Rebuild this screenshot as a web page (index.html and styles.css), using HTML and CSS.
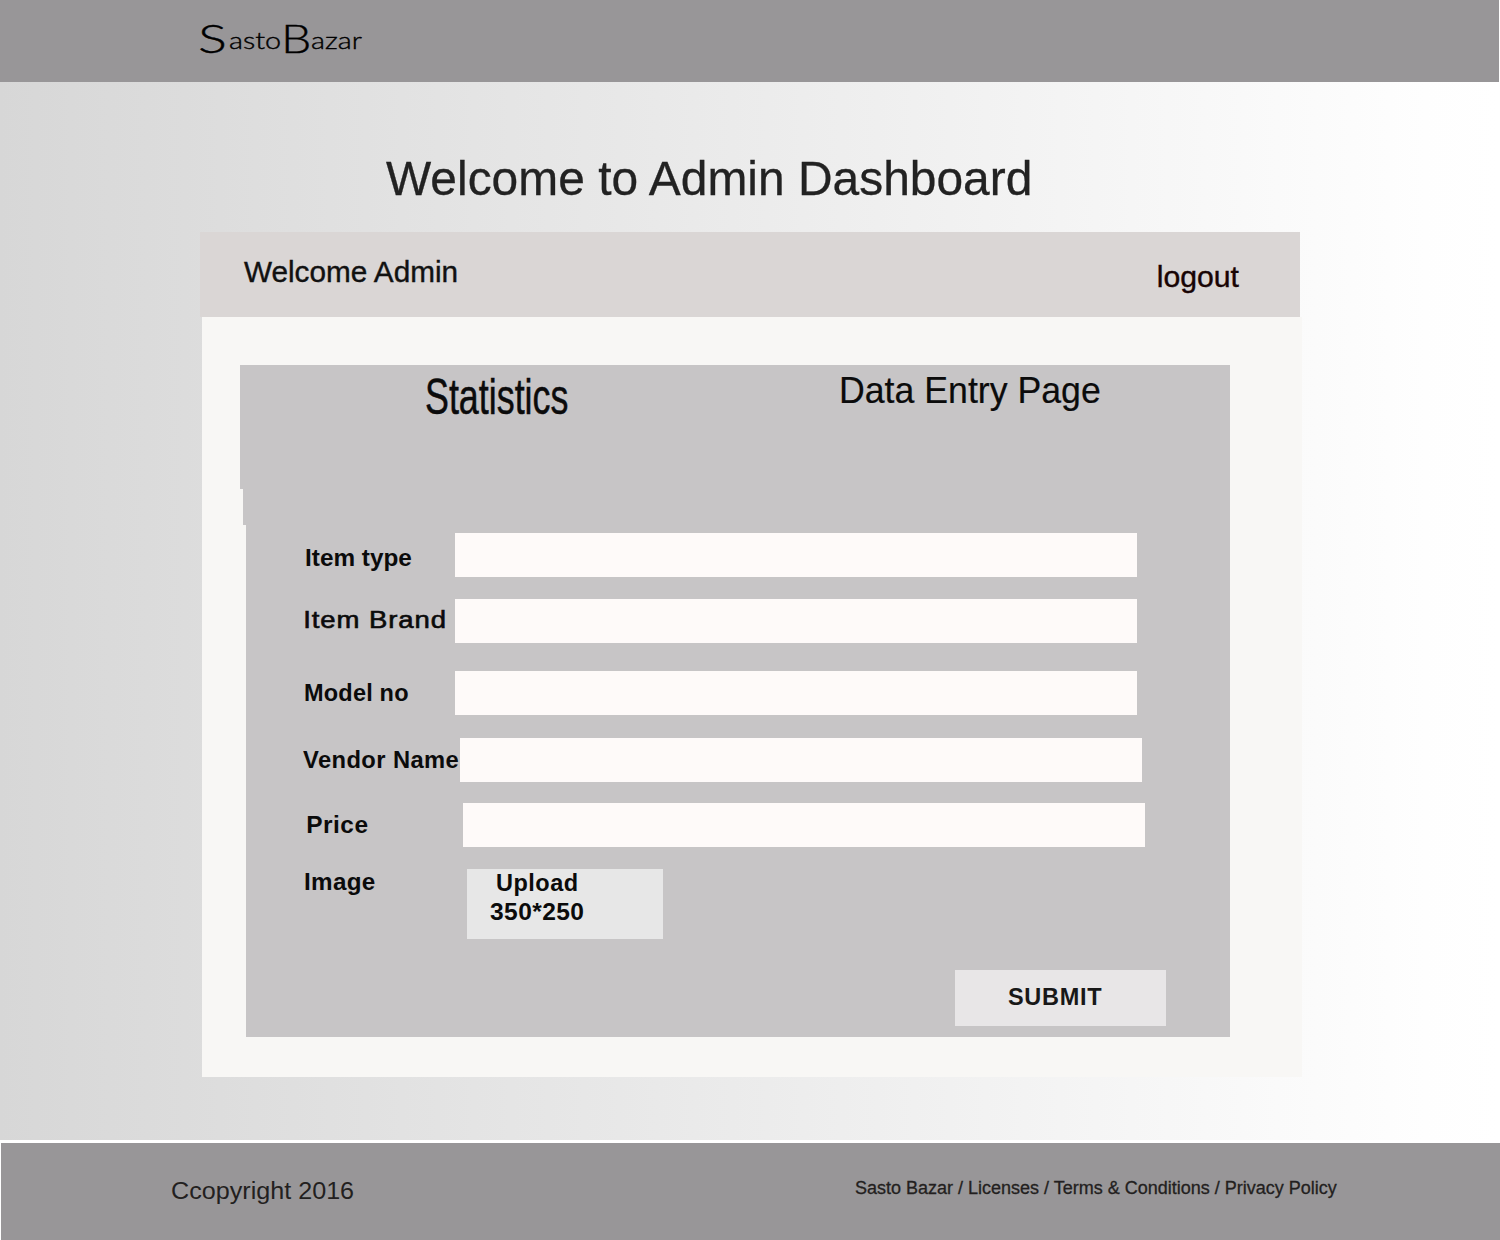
FILE: index.html
```html
<!DOCTYPE html>
<html lang="en">
<head>
<meta charset="utf-8">
<title>SastoBazar - Admin Dashboard</title>
<link rel="stylesheet" href="styles.css">
</head>
<body>
<header class="site-header">
  <div class="logo"><span class="cap cap-s">S</span><span class="low low-asto">asto</span><span class="cap cap-b">B</span><span class="low">azar</span></div>
</header>
<main class="main">
  <h1 class="title">Welcome to Admin Dashboard</h1>
  <section class="card">
    <div class="card-head">
      <span class="greeting">Welcome Admin</span>
      <a class="logout">logout</a>
    </div>
    <div class="card-body">
      <div class="panel">
        <nav class="tabs">
          <a class="tab tab-stats">Statistics</a>
          <a class="tab tab-entry">Data Entry Page</a>
        </nav>
        <form class="form">
          <div class="row row-type"><label class="label">Item type</label><div class="field"></div></div>
          <div class="row row-brand"><label class="label">Item Brand</label><div class="field"></div></div>
          <div class="row row-model"><label class="label">Model no</label><div class="field"></div></div>
          <div class="row row-vendor"><label class="label">Vendor Name</label><div class="field"></div></div>
          <div class="row row-price"><label class="label">Price</label><div class="field"></div></div>
          <div class="row row-image"><label class="label">Image</label>
            <div class="upload"><span class="upload-name">Upload</span><span class="upload-size">350*250</span></div>
          </div>
          <div class="submit"><span class="submit-text">SUBMIT</span></div>
        </form>
      </div>
    </div>
  </section>
</main>
<footer class="site-footer">
  <span class="copyright">Ccopyright 2016</span>
  <span class="links">Sasto Bazar / Licenses / Terms &amp; Conditions / Privacy Policy</span>
</footer>
</body>
</html>
```
FILE: styles.css
```css
* { box-sizing: border-box; }
body {
  margin: 0;
  width: 1500px;
  height: 1240px;
  overflow: hidden;
  background: #fff;
  color: #0b0b0b;
  font-family: "Liberation Sans", Arial, sans-serif;
}
span, a, label, .title { white-space: nowrap; transform-origin: 0 50%; }

.site-header { width: 1499px; height: 82px; padding: 20px 0 0 198px; background: #989698; }
.logo { display: flex; align-items: flex-start; color: #000; font-family: Papyrus, Lato, sans-serif; font-weight: 300; -webkit-text-stroke: .4px; }
.cap { width: 31px; font-size: 40px; line-height: 36px; }
.cap-s { transform: scaleX(1.35); }
.cap-b { width: 30px; transform: scaleX(1.2); }
.low { font-size: 24px; line-height: 24px; padding-top: 8px; transform: scaleX(1.2); }
.low-asto { width: 52px; }

.main {
  height: 1058px;
  padding-top: 68px;
  background: linear-gradient(90deg, #d7d7d7 0%, #fefefe 95%, #fff 100%);
}
.title { margin: 0 0 26px 386px; width: max-content; font-size: 49px; line-height: 56px; font-weight: 400; color: #222; transform: scaleX(.978); -webkit-text-stroke: .3px; }
.card { width: 1102px; margin-left: 200px; }
.card-head { display: flex; justify-content: space-between; width: 1100px; height: 85px; padding: 23px 61px 0 44px; background: #dad6d5; font-size: 30.2px; line-height: 34px; }
.greeting { color: #111; transform: scaleX(.984); -webkit-text-stroke: .4px; }
.logout { padding-top: 5px; color: #180404; -webkit-text-stroke: .4px; }
.card-body { height: 760px; margin-left: 2px; padding: 48px 72px 40px 38px; background: #f8f7f5; }

/* The left edge of the panel steps inwards twice. */
.panel {
  height: 672px;
  background: #c7c5c6;
  clip-path: polygon(0 0, 100% 0, 100% 100%, 6px 100%, 6px 160px, 3px 160px, 3px 124px, 0 124px);
}
.tabs { display: flex; height: 168px; padding: 4px 0 0 185px; }
.tab-stats { width: 414px; font-size: 50px; line-height: 56px; transform: scaleX(.717); -webkit-text-stroke: .5px; }
.tab-entry { padding-top: 2px; font-size: 36.3px; line-height: 40px; transform: scaleX(.983); -webkit-text-stroke: .2px; }

.form { display: flex; flex-direction: column; padding-left: 62px; font-size: 23.5px; line-height: 28px; font-weight: 700; }
.row { display: flex; height: 44px; }
.label { width: 153px; padding: 8px 0 0 1px; }
.field { width: 682px; height: 44px; background: #fefaf9; }
.row-type { margin-bottom: 22px; }
.row-type .label { padding: 11px 0 0 3px; transform: scaleX(1.035); }
.row-brand { margin-bottom: 28px; }
.row-brand .label { padding-top: 7px; font-weight: 400; letter-spacing: .8px; -webkit-text-stroke: .6px; transform: scaleX(1.17); }
.row-model { margin-bottom: 23px; }
.row-model .label { padding-left: 2px; letter-spacing: .2px; }
.row-vendor { margin-bottom: 21px; }
.row-vendor .label { width: 158px; letter-spacing: .4px; transform: scaleX(1.01); }
.row-price { margin-bottom: 22px; }
.row-price .label { width: 161px; padding-left: 4px; letter-spacing: .5px; transform: scaleX(1.04); }
.row-image { height: 70px; margin-bottom: 31px; }
.row-image .label { width: 165px; padding: 0 0 0 2px; margin-top: -1px; letter-spacing: .3px; transform: scaleX(1.03); }
.upload { display: flex; flex-direction: column; align-items: flex-start; width: 196px; height: 70px; background: #e7e7e7; line-height: 29px; }
.upload span { margin-left: 29px; letter-spacing: .5px; }
.upload .upload-size { margin-left: 23px; letter-spacing: .4px; transform: scaleX(1.045); }
.submit { width: 211px; height: 56px; margin-left: 653px; padding: 13px 0 0 53px; background: #e8e6e7; color: #181818; }
.submit-text { display: inline-block; letter-spacing: .7px; }

.site-footer {
  display: flex;
  height: 97px;
  margin: 3px 0 0 1px;
  padding: 34px 0 0 170px;
  background: #989698;
  color: #231f20;
}
.copyright { width: 684px; font-size: 24.8px; line-height: 28px; transform: scaleX(1.014); }
.links { margin-top: -1px; font-size: 18px; line-height: 24px; -webkit-text-stroke: .3px; }
```
